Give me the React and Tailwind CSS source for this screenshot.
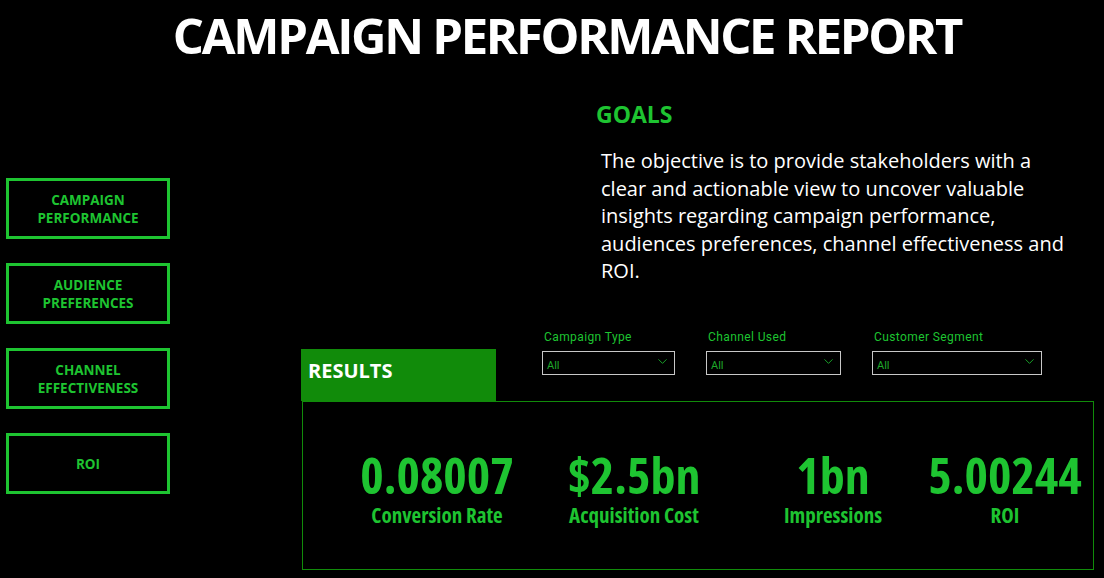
import { ChevronDown } from "lucide-react";

const NAV_ITEMS = [
  ["CAMPAIGN", "PERFORMANCE"],
  ["AUDIENCE", "PREFERENCES"],
  ["CHANNEL", "EFFECTIVENESS"],
  ["ROI"],
];

const FILTERS = [
  { label: "Campaign Type", width: "w-[133px]" },
  { label: "Channel Used", width: "w-[135px]" },
  { label: "Customer Segment", width: "w-[170px]" },
];

const KPIS = [
  { value: "0.08007", label: "Conversion Rate", width: "w-[200px]" },
  { value: "$2.5bn", label: "Acquisition Cost", width: "w-[194px]" },
  { value: "1bn", label: "Impressions", width: "w-[204px]" },
  { value: "5.00244", label: "ROI", width: "w-[140px]" },
];

const NavButton = ({ lines }) => (
  <div className="h-[61px] border-[3px] border-[#1ec431] flex flex-col items-center justify-center text-[13.5px] leading-[18px] font-bold text-[#1ec431] font-['Open_Sans',sans-serif] [font-stretch:88%]">
    {lines.map((line) => (
      <span key={line}>{line}</span>
    ))}
  </div>
);

const Filter = ({ label, width }) => (
  <div className="flex flex-col">
    <span className="ml-[2px] text-[12px] leading-[16px] text-[#1ec431] font-['Roboto',sans-serif] tracking-[0.4px]">
      {label}
    </span>
    <div
      className={`${width} mt-[6px] h-[24px] border border-[#c8c8c8] flex items-end justify-between pl-[4px] pr-[4px] pb-[1px]`}
    >
      <span className="text-[11px] leading-[14px] text-[#1ea82a] font-['Roboto',sans-serif]">
        All
      </span>
      <ChevronDown size={15} strokeWidth={1.3} className="text-[#1ec431] mb-[4px]" />
    </div>
  </div>
);

const Kpi = ({ value, label, width }) => (
  <div className={`${width} flex flex-col items-center shrink-0`}>
    <span className="text-[50px] leading-[52px] font-bold text-[#1ec431] font-['Open_Sans',sans-serif] [font-stretch:80%] whitespace-nowrap">
      {value}
    </span>
    <span className="mt-[2px] text-[21px] leading-[24px] font-bold text-[#1ec431] font-['Open_Sans',sans-serif] [font-stretch:80%] whitespace-nowrap">
      {label}
    </span>
  </div>
);

export default function App() {
  return (
    <div className="w-[1104px] h-[578px] bg-black overflow-hidden">
      <h1 className="pt-[7px] pl-[30px] text-center text-[49px] leading-[56px] tracking-[-2.3px] font-bold text-white font-['Open_Sans',sans-serif] [font-stretch:88%]">
        CAMPAIGN PERFORMANCE REPORT
      </h1>

      <div className="flex">
        <div className="ml-[6px] mt-[115px] w-[164px] flex flex-col gap-[24px]">
          {NAV_ITEMS.map((lines) => (
            <NavButton key={lines.join(" ")} lines={lines} />
          ))}
        </div>

        <div className="flex-1 flex flex-col">
          <h2 className="ml-[426px] mt-[36px] text-[23px] leading-[30px] font-bold text-[#1ec431] font-['Open_Sans',sans-serif] [font-stretch:90%]">
            GOALS
          </h2>
          <p className="ml-[431px] mt-[18px] w-[472px] text-[20px] leading-[27.5px] text-white font-['Open_Sans',sans-serif] [font-stretch:90%]">
            The objective is to provide stakeholders with a clear and actionable
            view to uncover valuable insights regarding campaign performance,
            audiences preferences, channel effectiveness and ROI.
          </p>

          <div className="mt-[44px] ml-[131px] flex items-start">
            <div className="mt-[20px] w-[195px] h-[52px] bg-[#118b0a] pl-[7px] pt-[10px] text-[20px] leading-[24px] font-bold text-white font-['Open_Sans',sans-serif] [font-stretch:88%]">
              RESULTS
            </div>
            <div className="ml-[46px] flex gap-[31px]">
              {FILTERS.map((f) => (
                <Filter key={f.label} {...f} />
              ))}
            </div>
          </div>

          <div className="ml-[132px] w-[792px] h-[169px] border border-[#118b0a] flex items-start pt-[47px] pl-[34px]">
            {KPIS.map((k) => (
              <Kpi key={k.label} {...k} />
            ))}
          </div>
        </div>
      </div>
    </div>
  );
}
